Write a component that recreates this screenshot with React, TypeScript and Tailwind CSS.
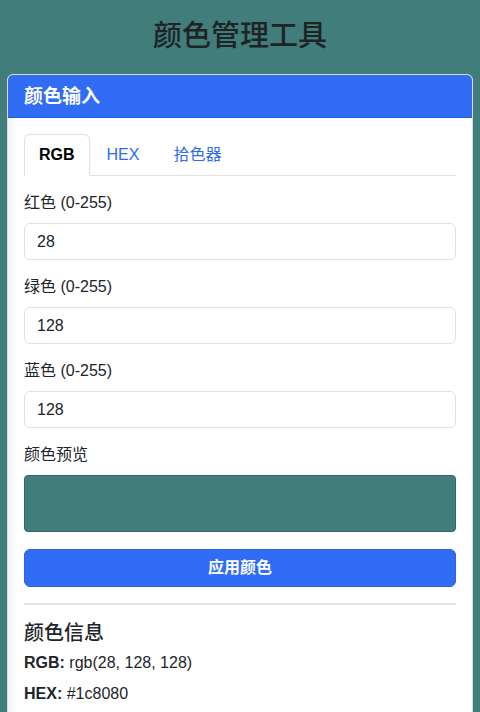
import React, { useState } from 'react';

const font = { fontFamily: '"Liberation Sans", "Noto Sans CJK SC", sans-serif' };

export default function App() {
  const [tab, setTab] = useState('rgb');
  const [r, setR] = useState('28');
  const [g, setG] = useState('128');
  const [b, setB] = useState('128');

  const fields = [
    { label: '红色 (0-255)', value: r, set: setR },
    { label: '绿色 (0-255)', value: g, set: setG },
    { label: '蓝色 (0-255)', value: b, set: setB },
  ];

  const tabs = [
    { id: 'rgb', label: 'RGB' },
    { id: 'hex', label: 'HEX' },
    { id: 'picker', label: '拾色器' },
  ];

  return (
    <div className="min-h-[712px] bg-[#417d7b] px-[7px] pb-6 text-[#212529]" style={font}>
      {/* Title */}
      <h1 className="pt-[15px] pb-[17px] text-center text-[29px] font-medium leading-[42px] text-[#1f2326]">
        颜色管理工具
      </h1>

      {/* Card */}
      <div className="overflow-hidden rounded-[6px] border border-[#d8dde2] bg-white shadow-[inset_10px_0_8px_-8px_rgba(0,0,0,0.08)]">
        <div className="border-b border-[#1d5fe0] bg-[#316cf4] px-4 pt-[8px] pb-[6px] text-[19px] font-bold leading-[28px] text-white">
          颜色输入
        </div>

        <div className="px-4 pt-4 pb-6">
          {/* Tabs */}
          <div className="flex border-b border-[#dee2e6]">
            {tabs.map((t) => (
              <button
                key={t.id}
                onClick={() => setTab(t.id)}
                className={
                  tab === t.id
                    ? '-mb-px rounded-t-[6px] border border-[#dee2e6] border-b-white bg-white px-[14px] py-[9px] text-[16px] font-bold leading-[22px] text-black'
                    : '-mb-px border border-transparent px-4 py-[9px] text-[16px] leading-[22px] text-[#2d6cf0]'
                }
              >
                {t.label}
              </button>
            ))}
          </div>

          {/* Fields */}
          <div className="pt-[16px]">
            {fields.map((f) => (
              <div key={f.label} className="mb-[16px]">
                <label className="block pb-[9px] text-[16px] leading-[22px] text-[#212529]">{f.label}</label>
                <input
                  value={f.value}
                  onChange={(e) => f.set(e.target.value)}
                  className="block h-[37px] w-full rounded-[6px] border border-[#dee2e6] px-3 text-[16px] text-[#212529] outline-none"
                />
              </div>
            ))}

            <div className="pb-[9px] text-[16px] leading-[22px]">颜色预览</div>
            <div className="h-[57px] w-full rounded-[4px] border border-[#2c6866] bg-[#417d7b]" />

            <button className="mt-[17px] h-[38px] w-full rounded-[6px] border border-[#2a63e6] bg-[#316cf4] text-[16px] font-bold text-white">
              应用颜色
            </button>

            <hr className="mt-[16px] border-t-2 border-[#e2e4e6]" />

            <div className="pt-[13px] text-[20px] font-medium leading-[30px] text-[#212529]">颜色信息</div>
            <div className="pt-[4px] text-[16px] leading-[22px]">
              <span className="font-bold">RGB:</span> rgb({r}, {g}, {b})
            </div>
            <div className="pt-[9px] text-[16px] leading-[22px]">
              <span className="font-bold">HEX:</span> #1c8080
            </div>
          </div>
        </div>
      </div>
    </div>
  );
}
